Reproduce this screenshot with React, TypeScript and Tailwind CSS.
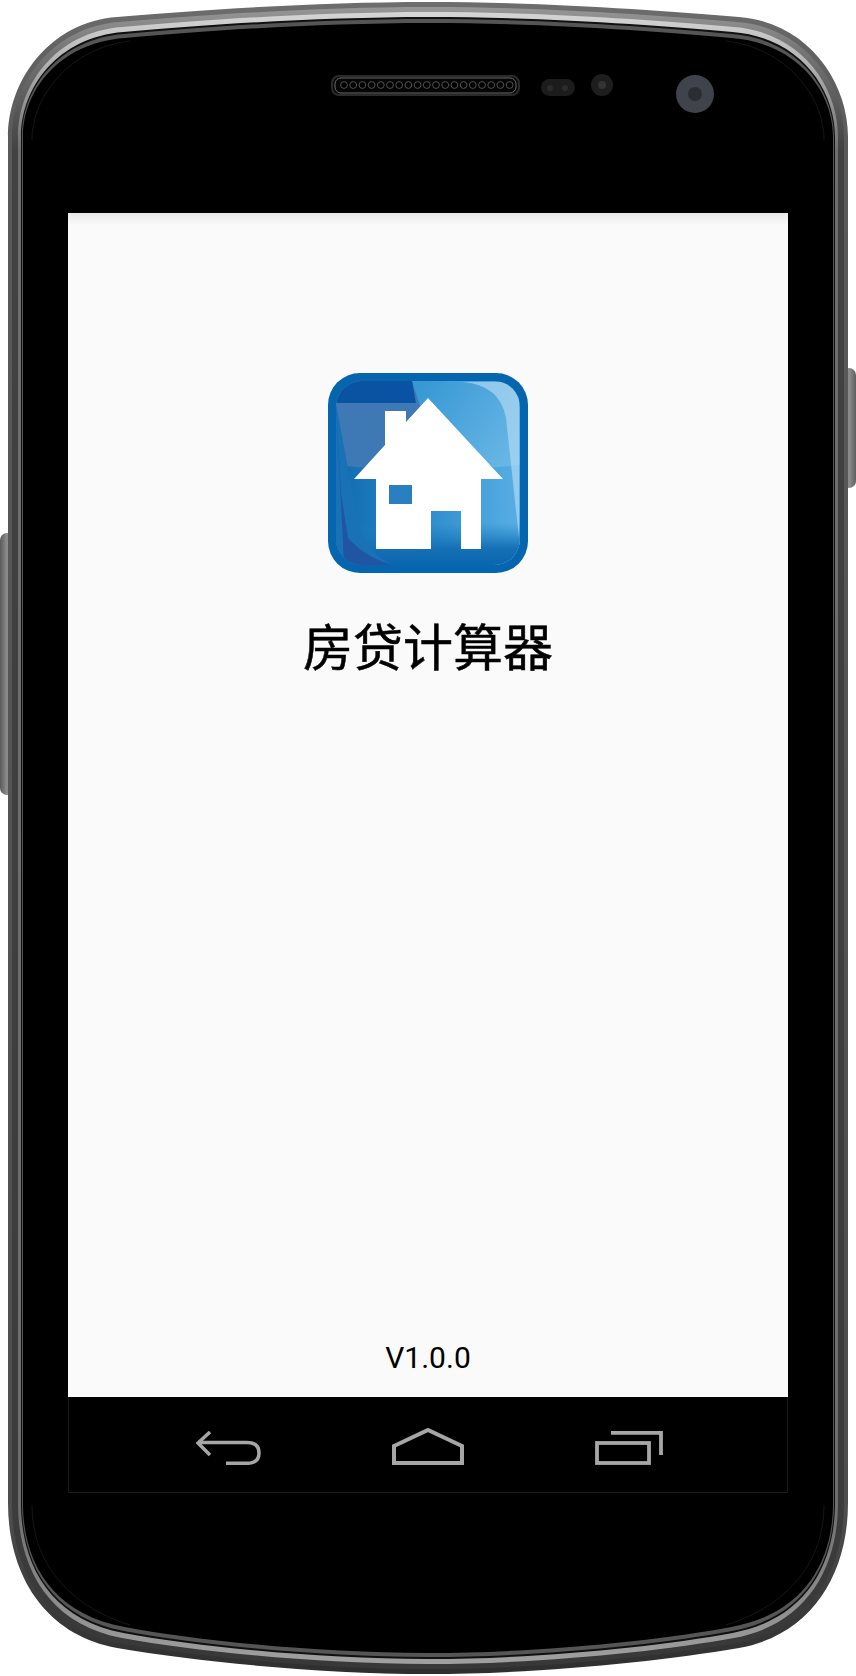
const fontCjk = "font-['Noto_Sans_CJK_SC','Noto_Sans_CJK_TC',sans-serif]";

// phone silhouette, inset by ix/iy so the rim can be stacked as layers
function shell(ix: number, iy: number) {
  const l = 8 + ix;
  const r = 848 - ix;
  const cx = 428;
  const t = 2 + iy;
  const b = 1674 - iy;
  const m = (x: number) => 856 - x;
  const a = 50 + ix * 0.6;
  const c = 117 + ix * 0.5;
  return [
    `M${l} 137`,
    `C${l} ${80 + iy * 0.5} ${a} ${22 + iy} ${c} ${17 + iy}`,
    `C200 ${10 + iy} 320 ${t} ${cx} ${t}`,
    `C536 ${t} 656 ${10 + iy} ${m(c)} ${17 + iy}`,
    `C${m(a)} ${22 + iy} ${r} ${80 + iy * 0.5} ${r} 137`,
    `L${r} 1503`,
    `C${r} ${1575 - iy * 0.5} ${m(45 + ix * 0.6)} ${1635 - iy} ${m(c)} ${1648 - iy}`,
    `C656 ${1662 - iy} 536 ${b} ${cx} ${b}`,
    `C320 ${b} 200 ${1662 - iy} ${c} ${1648 - iy}`,
    `C${45 + ix * 0.6} ${1635 - iy} ${l} ${1575 - iy * 0.5} ${l} 1503`,
    "Z",
  ].join(" ");
}

function PhoneBody() {
  const holes = Array.from({ length: 19 }, (_, i) => 344 + i * 9.2);
  return (
    <svg className="absolute inset-0" width="856" height="1676" viewBox="0 0 856 1676">
      <defs>
        <linearGradient id="btn" x1="0" x2="1" y1="0" y2="0">
          <stop offset="0" stopColor="#5a5a5a" />
          <stop offset="0.5" stopColor="#8e8e8e" />
          <stop offset="1" stopColor="#5e5e5e" />
        </linearGradient>
        <linearGradient id="rimA" gradientUnits="userSpaceOnUse" x1="0" x2="0" y1="0" y2="1676">
          <stop offset="0" stopColor="#6e6e6e" />
          <stop offset="0.03" stopColor="#626262" />
          <stop offset="0.09" stopColor="#5a5a5a" />
          <stop offset="0.9" stopColor="#4e4e4e" />
          <stop offset="1" stopColor="#2e2e2e" />
        </linearGradient>
        <linearGradient id="rimB" gradientUnits="userSpaceOnUse" x1="0" x2="0" y1="0" y2="1676">
          <stop offset="0" stopColor="#9c9c9c" />
          <stop offset="0.03" stopColor="#767676" />
          <stop offset="0.09" stopColor="#424242" />
          <stop offset="0.9" stopColor="#3c3c3c" />
          <stop offset="1" stopColor="#383838" />
        </linearGradient>
        <linearGradient id="rimC" gradientUnits="userSpaceOnUse" x1="0" x2="0" y1="0" y2="1676">
          <stop offset="0" stopColor="#dedede" />
          <stop offset="0.04" stopColor="#b0b0b0" />
          <stop offset="0.09" stopColor="#6e6e6e" />
          <stop offset="0.9" stopColor="#6e6e6e" />
          <stop offset="1" stopColor="#a4a4a4" />
        </linearGradient>
      </defs>

      <rect x="0" y="533" width="14" height="262" rx="7" fill="url(#btn)" />
      <rect x="842" y="368" width="14" height="120" rx="7" fill="url(#btn)" />

      <path d={shell(0, 0)} fill="url(#rimA)" />
      <path d={shell(4, 5)} fill="url(#rimB)" />
      <path d={shell(10, 10)} fill="url(#rimC)" />
      <path d={shell(13, 15)} fill="#101010" />
      <path d={shell(14, 17)} fill="#555555" />
      <path d={shell(15, 21)} fill="#000000" />

      {/* faint inner line at the corners */}
      <g fill="none" stroke="#161616" strokeWidth="1">
        <path d="M32 140C32 96 70 48 130 41" />
        <path d="M824 140C824 96 786 48 726 41" />
        <path d="M32 1505C32 1560 66 1605 130 1625" />
        <path d="M824 1505C824 1560 790 1605 726 1625" />
      </g>

      {/* earpiece */}
      <rect x="332" y="76" width="187" height="19" rx="7" fill="#0a0a0a" stroke="#2a2a2a" strokeWidth="2" />
      <rect x="335" y="78" width="181" height="15" rx="6" fill="#050505" stroke="#6a6a6a" strokeWidth="1" />
      {holes.map((x) => (
        <circle key={x} cx={x} cy="85" r="3.4" fill="#000000" stroke="#5a5a5a" strokeWidth="0.9" />
      ))}

      {/* sensors */}
      <rect x="541" y="79" width="34" height="17" rx="8.5" fill="#1c1c1c" />
      <circle cx="550" cy="88" r="3" fill="#2c2c2c" />
      <circle cx="565" cy="88" r="3" fill="#2c2c2c" />
      <circle cx="602" cy="85" r="11" fill="#1e1e1e" />
      <circle cx="602" cy="85" r="4" fill="#333333" />
      <circle cx="695" cy="94" r="19" fill="#3f444c" />
      <circle cx="695" cy="94" r="7" fill="#2a2d32" />
    </svg>
  );
}

function AppIcon() {
  return (
    <svg width="200" height="200" viewBox="0 0 200 200" className="shrink-0">
      <defs>
        <clipPath id="outer">
          <rect width="200" height="200" rx="32" />
        </clipPath>
        <clipPath id="inner">
          <rect x="8" y="8" width="184" height="184" rx="26" />
        </clipPath>
        <linearGradient id="sky" x1="0" x2="1" y1="0" y2="0.7">
          <stop offset="0.3" stopColor="#3597d4" />
          <stop offset="1" stopColor="#78c0ea" />
        </linearGradient>
        <linearGradient id="low" x1="0" x2="1" y1="0" y2="0">
          <stop offset="0" stopColor="#0f6aae" />
          <stop offset="0.45" stopColor="#2b8acb" />
          <stop offset="1" stopColor="#58afe4" />
        </linearGradient>
        <linearGradient id="bottom" x1="0" x2="0" y1="0" y2="1">
          <stop offset="0" stopColor="#1a7cbe" stopOpacity="0" />
          <stop offset="0.6" stopColor="#1670b6" />
          <stop offset="1" stopColor="#0a66ae" />
        </linearGradient>
      </defs>
      <g clipPath="url(#outer)">
        <rect width="200" height="200" fill="#0565ae" />
        <g clipPath="url(#inner)">
          <rect x="8" y="8" width="184" height="184" fill="url(#sky)" />
          <path d="M8 8H84L92 33L70 95H8Z" fill="#3f79b5" />
          <path d="M8 8H84L88 30H8Z" fill="#0a53a3" />
          <path d="M8 92Q100 102 192 92V192H8Z" fill="url(#low)" />
          <rect x="8" y="150" width="184" height="42" fill="url(#bottom)" />
          <path d="M8 30L30 150Q40 182 65 192H8Z" fill="#1a72b6" />
          <path d="M8 30L13 120L20 165Q38 185 65 192H16Z" fill="#24499c" opacity="0.7" />
          <path d="M135 9Q172 12 178 45L191 165V9Z" fill="#b5dcf3" opacity="0.65" />
        </g>
        <path
          d="M100 25L175 106H153V176H133V138H103V176H48V106H26L57 72V38H78V49Z"
          fill="#ffffff"
        />
        <rect x="61" y="112" width="23" height="19" fill="#2a7fc0" />
      </g>
    </svg>
  );
}

function BackIcon() {
  return (
    <svg width="65" height="34" viewBox="0 0 65 34" fill="none" stroke="#a6a6a6" strokeWidth="3.5">
      <path d="M14 1L2 12L14 24" strokeWidth="3.5" />
      <path d="M2 11.5H51Q63 11.5 63 22Q63 32.3 51 32.3H30" />
    </svg>
  );
}

function HomeIcon() {
  return (
    <svg width="72" height="37" viewBox="0 0 72 37" fill="none" stroke="#a6a6a6" strokeWidth="4">
      <path d="M2 18L36 2L70 18V35H2Z" />
    </svg>
  );
}

function RecentsIcon() {
  return (
    <svg width="68" height="34" viewBox="0 0 68 34" fill="none" stroke="#a6a6a6" strokeWidth="3.8">
      <path d="M16 1.9H66V24" />
      <rect x="2" y="12" width="52" height="20" />
    </svg>
  );
}

export default function App() {
  return (
    <div className="relative w-[856px] h-[1676px] bg-white overflow-hidden">
      <PhoneBody />
      <div className="relative flex flex-col pt-[213px] pl-[68px] w-[788px]">
        <main className="flex flex-col items-center h-[1184px] bg-[#fafafa]">
          <div className="w-full h-3 shrink-0 bg-gradient-to-b from-[#e9e9e9] to-[#fafafa]" />
          <div className="mt-[148px]">
            <AppIcon />
          </div>
          <h1 className={`mt-[36px] text-[50px] leading-[70px] font-normal text-black [-webkit-text-stroke:0.5px_#000] ${fontCjk}`}>房贷计算器</h1>
          <p className="mt-auto mb-[19px] text-[30px] leading-[40px] text-black font-['Roboto',sans-serif]">V1.0.0</p>
        </main>
        <nav className="flex items-end h-[96px] pl-[127px] pb-[27px] gap-[131px] bg-black border-x border-b border-[#1a1a1a]">
          <BackIcon />
          <HomeIcon />
          <RecentsIcon />
        </nav>
      </div>
    </div>
  );
}
